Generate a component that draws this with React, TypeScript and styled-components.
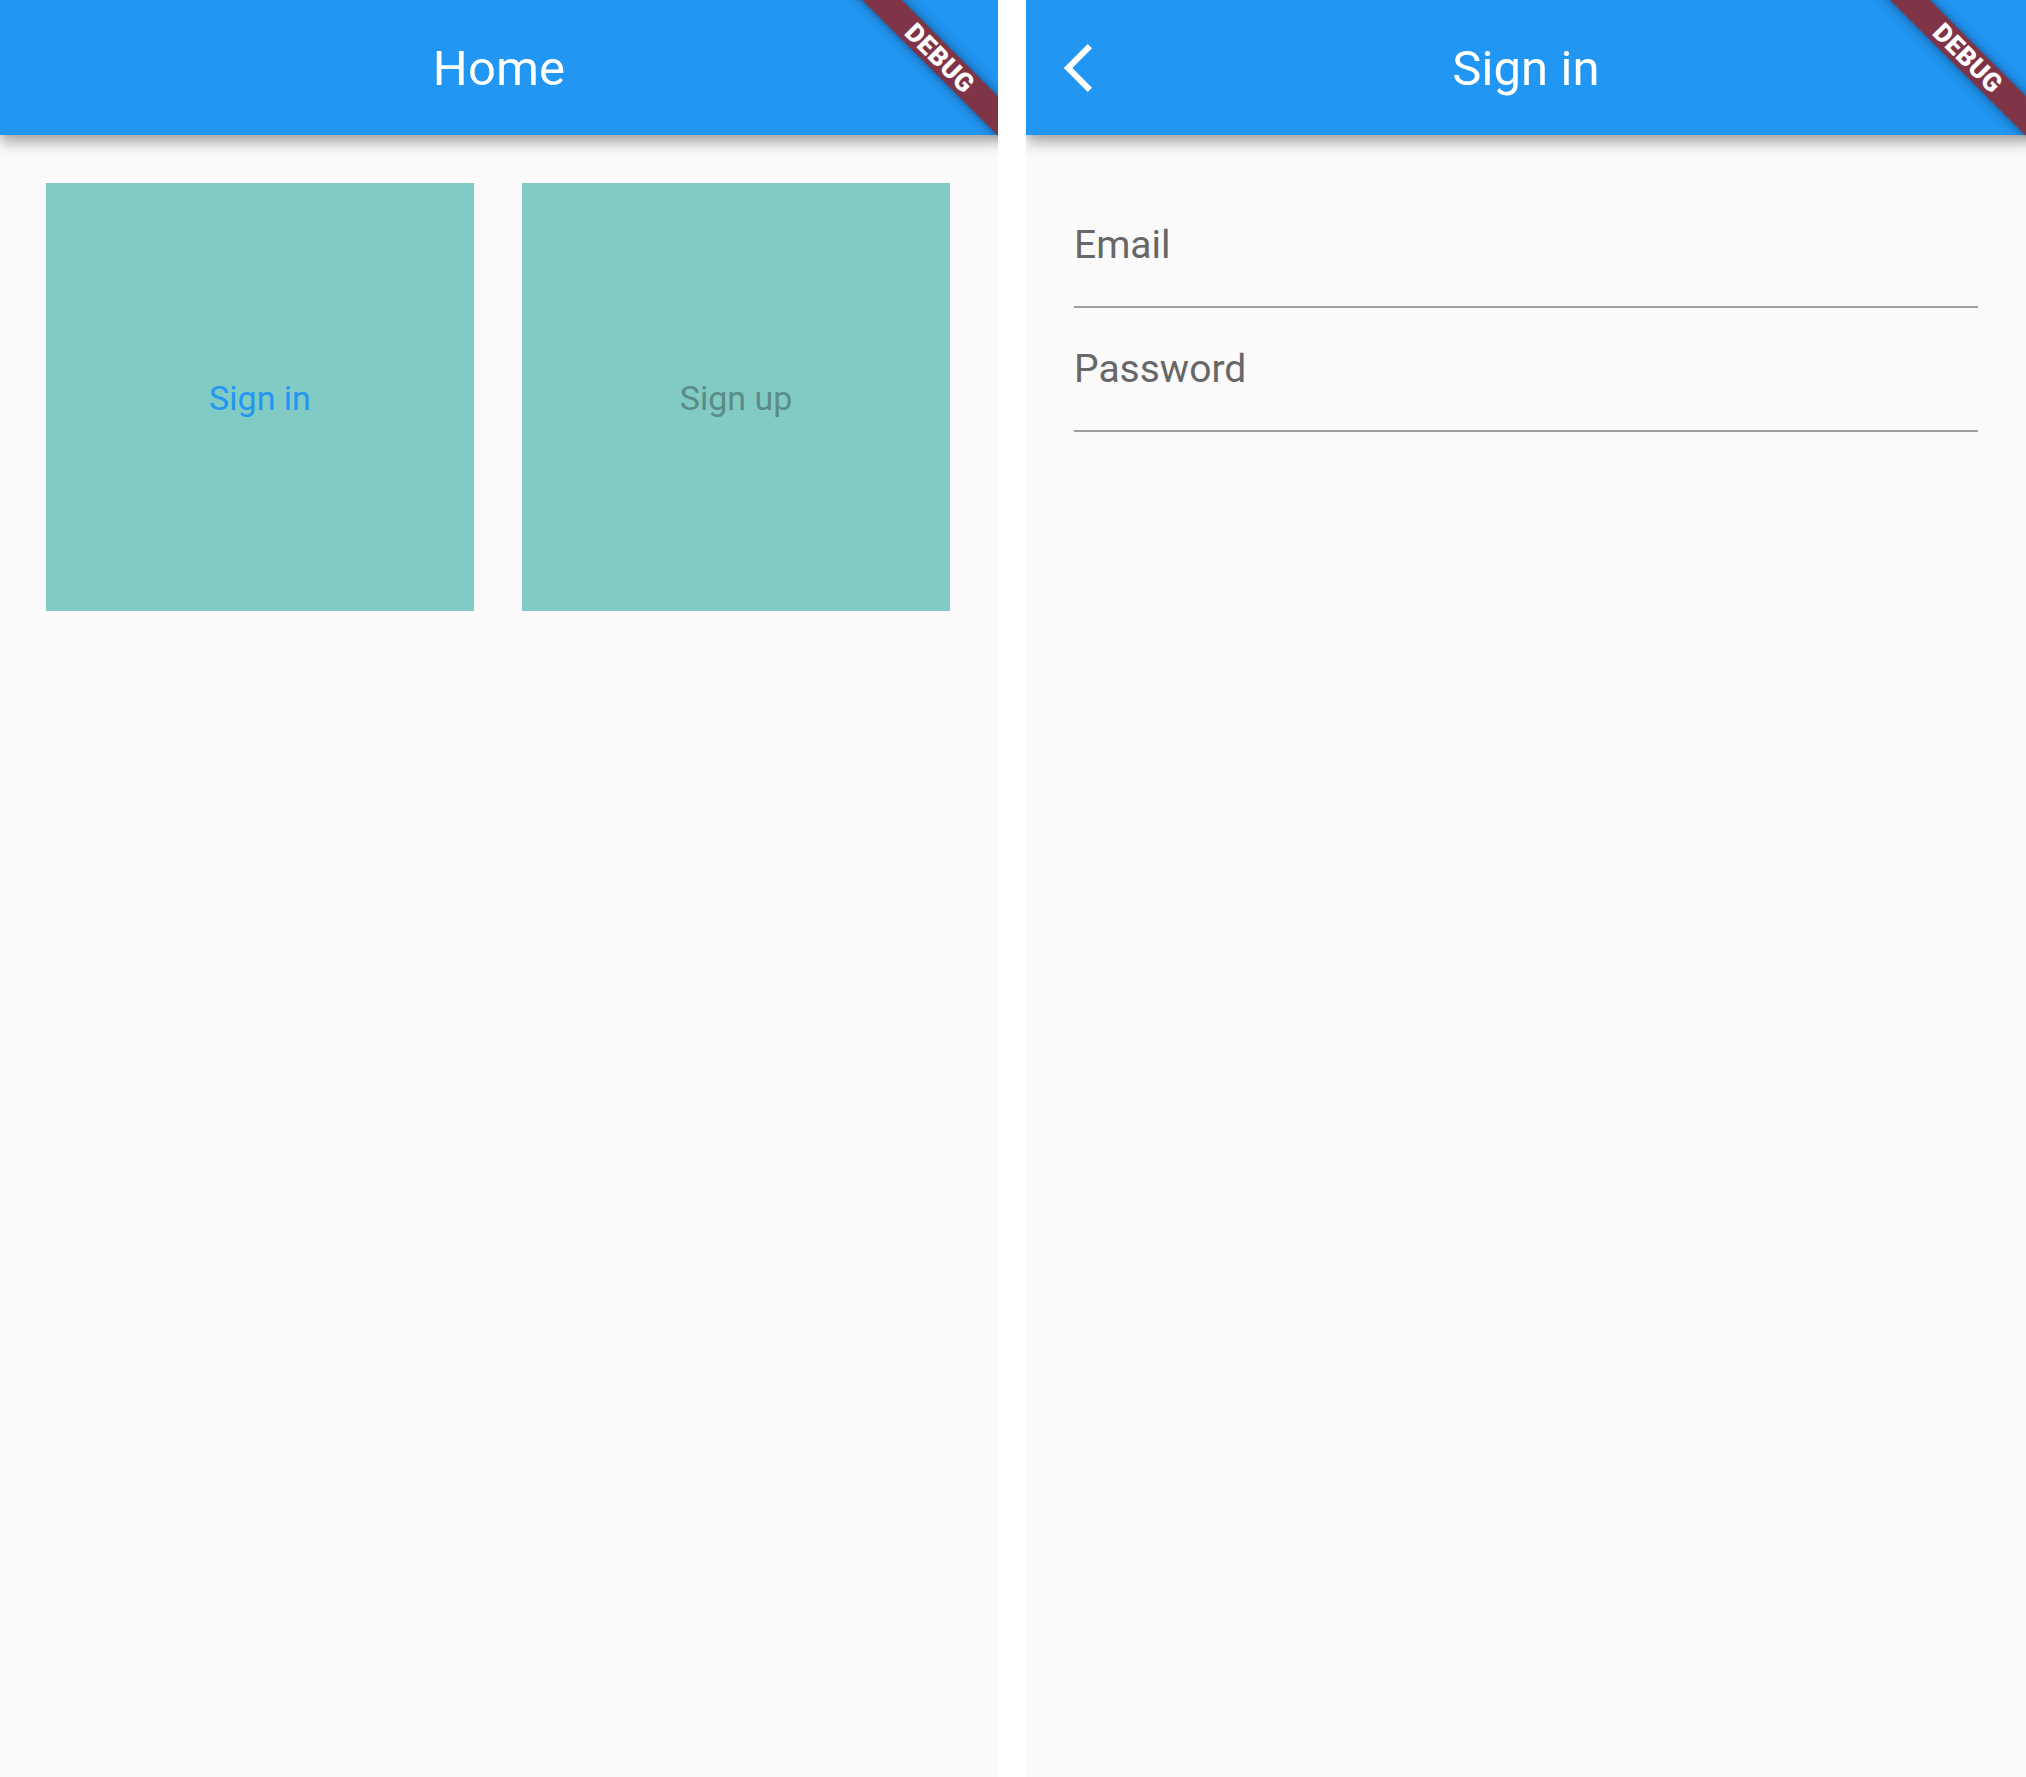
import React from "react";
import styled, { createGlobalStyle } from "styled-components";

const GlobalStyle = createGlobalStyle`
  html, body {
    margin: 0;
    padding: 0;
    background: #ffffff;
  }
  * { box-sizing: border-box; }
  body {
    font-family: Roboto, "Liberation Sans", sans-serif;
  }
`;

const Screen = styled.div`
  display: flex;
  gap: 28px;
  width: 2026px;
  height: 1777px;
  background: #ffffff;
`;

const Panel = styled.div<{ $width: number }>`
  position: relative;
  width: ${(p) => p.$width}px;
  height: 100%;
  background: #fafafa;
  overflow: hidden;
  display: flex;
  flex-direction: column;
`;

const AppBar = styled.header`
  position: relative;
  z-index: 1;
  height: 135px;
  flex: none;
  background: #2196f3;
  display: grid;
  grid-template-columns: 135px 1fr 135px;
  align-items: center;
  box-shadow: 0 5px 10px -2px rgba(0, 0, 0, 0.2), 0 10px 12px 0 rgba(0, 0, 0, 0.14),
    0 2px 24px 0 rgba(0, 0, 0, 0.12);
`;

const Leading = styled.div`
  height: 100%;
  display: flex;
  align-items: center;
  padding-left: 37px;
`;

const Title = styled.h1`
  margin: 0;
  text-align: center;
  color: #ffffff;
  font-family: Roboto, "Liberation Sans", sans-serif;
  font-size: 49px;
  font-weight: 400;
  letter-spacing: 0.1px;
  line-height: 56px;
  padding-top: 2px;
`;

const Ribbon = styled.div`
  position: absolute;
  z-index: 5;
  top: 44px;
  right: -92px;
  width: 300px;
  height: 28px;
  transform: rotate(45deg);
  background: #7f3448;
  box-shadow: 0 0 12px rgba(0, 0, 0, 0.45);
  display: flex;
  align-items: center;
  justify-content: center;
  color: #ffffff;
  font-family: Roboto, "Liberation Sans", sans-serif;
  font-weight: 900;
  font-size: 26px;
  line-height: 1;
  letter-spacing: 0.5px;
`;

const TileGrid = styled.div`
  display: grid;
  grid-template-columns: repeat(2, 428px);
  grid-auto-rows: 428px;
  gap: 48px;
  padding: 48px 48px 0 46px;
`;

const Tile = styled.button<{ $active?: boolean }>`
  border: none;
  margin: 0;
  padding: 0;
  background: #82cbc4;
  display: flex;
  align-items: center;
  justify-content: center;
  font-family: Roboto, "Liberation Sans", sans-serif;
  font-size: 34px;
  font-weight: 400;
  color: ${(p) => (p.$active ? "#2196f3" : "#5b8c87")};
  padding-top: 2px;
  cursor: pointer;
`;

const Form = styled.form`
  display: flex;
  flex-direction: column;
  padding: 51px 48px 0;
`;

const Field = styled.label`
  display: block;
  height: 122px;
  padding-top: 36px;
  border-bottom: 2px solid #9e9e9e;

  & + & {
    height: 124px;
    padding-top: 38px;
  }
`;

const FieldLabel = styled.span`
  display: block;
  font-family: Roboto, "Liberation Sans", sans-serif;
  font-size: 39px;
  line-height: 47px;
  color: #676767;
`;

const BackIcon = () => (
  <svg width="58" height="58" viewBox="0 0 24 24" aria-hidden="true">
    <path d="M17.51 3.87L15.73 2.1 5.84 12l9.9 9.9 1.77-1.77L9.38 12l8.13-8.13z" fill="#ffffff" transform="translate(-5.5 0)" />
  </svg>
);

export default function App() {
  return (
    <>
      <GlobalStyle />
      <Screen>
        <Panel $width={998}>
          <AppBar>
            <Leading />
            <Title>Home</Title>
            <div />
          </AppBar>
          <Ribbon>DEBUG</Ribbon>
          <TileGrid>
            <Tile $active>Sign in</Tile>
            <Tile>Sign up</Tile>
          </TileGrid>
        </Panel>
        <Panel $width={1000}>
          <AppBar>
            <Leading>
              <BackIcon />
            </Leading>
            <Title>Sign in</Title>
            <div />
          </AppBar>
          <Ribbon>DEBUG</Ribbon>
          <Form>
            <Field>
              <FieldLabel>Email</FieldLabel>
            </Field>
            <Field>
              <FieldLabel>Password</FieldLabel>
            </Field>
          </Form>
        </Panel>
      </Screen>
    </>
  );
}
